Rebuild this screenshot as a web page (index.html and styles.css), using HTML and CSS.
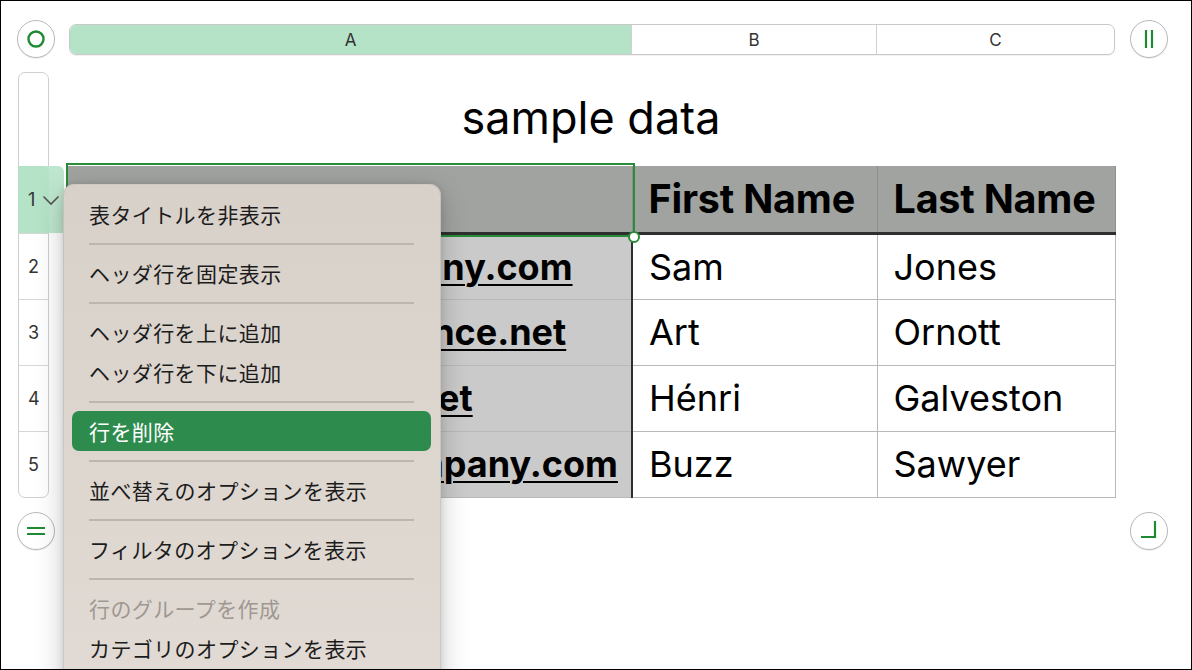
FILE: index.html
```html
<!DOCTYPE html>
<html lang="ja">
<head>
<meta charset="utf-8">
<title>sample data</title>
<link rel="stylesheet" href="styles.css">
</head>
<body>
<div class="page">
  <div class="sheet">
    <div class="corner corner-tl">
      <div class="knob">
        <svg width="22" height="22" viewBox="0 0 22 22"><circle cx="11" cy="11" r="7.5" fill="none" stroke="#1f8a33" stroke-width="2.4"/></svg>
      </div>
    </div>
    <div class="colbar">
      <div class="colhead col-a sel">A</div>
      <div class="colhead col-b">B</div>
      <div class="colhead col-c">C</div>
    </div>
    <div class="corner corner-tr">
      <div class="knob">
        <svg width="22" height="22" viewBox="0 0 22 22"><path d="M8 2v18M14 2v18" stroke="#1f8a33" stroke-width="2.2" fill="none"/></svg>
      </div>
    </div>

    <div class="rail">
      <div class="rail-top"></div>
      <div class="rowhead r1 sel"><span>1</span>
        <svg class="chev" width="18" height="11" viewBox="0 0 18 11"><path d="M1.5 1.5l7.5 7.5 7.5-7.5" fill="none" stroke="#555" stroke-width="1.6"/></svg>
      </div>
      <div class="rowhead r2"><span>2</span></div>
      <div class="rowhead r3"><span>3</span></div>
      <div class="rowhead r4"><span>4</span></div>
      <div class="rowhead r5"><span>5</span></div>
    </div>

    <div class="title">sample data</div>

    <div class="tablewrap">
      <table class="grid">
        <colgroup><col class="w-a"><col class="w-b"><col class="w-c"></colgroup>
        <tr class="hdr"><th class="ca"></th><th>First Name</th><th>Last Name</th></tr>
        <tr><td class="ca"><u>sam.jones@acompany.com</u></td><td>Sam</td><td>Jones</td></tr>
        <tr><td class="ca"><u>art.ornott@abc.finance.net</u></td><td>Art</td><td>Ornott</td></tr>
        <tr><td class="ca"><u>henri.galves@abc.net</u></td><td>Hénri</td><td>Galveston</td></tr>
        <tr><td class="ca"><u>buzz.sawyer@acompany.com</u></td><td>Buzz</td><td>Sawyer</td></tr>
      </table>
      <div class="selection"></div>
      <div class="handle"></div>
    </div>

    <div class="corner corner-bl">
      <div class="knob">
        <svg width="22" height="22" viewBox="0 0 22 22"><path d="M2 8h18M2 14h18" stroke="#1f8a33" stroke-width="2.2" fill="none"/></svg>
      </div>
    </div>
    <div class="corner corner-br">
      <div class="knob">
        <svg width="22" height="22" viewBox="0 0 22 22"><path d="M17 1v16H3" stroke="#1f8a33" stroke-width="2.2" fill="none"/></svg>
      </div>
    </div>
  </div>

  <div class="menu">
    <div class="item">表タイトルを非表示</div>
    <div class="sep"></div>
    <div class="item">ヘッダ行を固定表示</div>
    <div class="sep"></div>
    <div class="item">ヘッダ行を上に追加</div>
    <div class="item">ヘッダ行を下に追加</div>
    <div class="sep"></div>
    <div class="item active">行を削除</div>
    <div class="sep"></div>
    <div class="item">並べ替えのオプションを表示</div>
    <div class="sep"></div>
    <div class="item">フィルタのオプションを表示</div>
    <div class="sep"></div>
    <div class="item disabled">行のグループを作成</div>
    <div class="item">カテゴリのオプションを表示</div>
  </div>
</div>
</body>
</html>
```
FILE: styles.css
```css
* { box-sizing: border-box; }
html, body { margin: 0; padding: 0; background: #fff; }
body { font-family: Inter, "Liberation Sans", "Noto Sans CJK JP", sans-serif; color: #000; }

.page {
  width: 1192px;
  height: 670px;
  border: 1px solid #000;
  position: relative;
  overflow: hidden;
  background: #fff;
}

.sheet {
  display: grid;
  grid-template-columns: 66px 1048px 1fr;
  grid-template-rows: 71px 94px 332px 1fr;
}

.corner { display: flex; }
.corner-tl { grid-column: 1; grid-row: 1; padding: 19px 0 0 16px; }
.corner-tr { grid-column: 3; grid-row: 1; padding: 19px 0 0 15px; }
.corner-bl { grid-column: 1; grid-row: 4; padding: 14px 0 0 16px; }
.corner-br { grid-column: 3; grid-row: 4; padding: 14px 0 0 15px; }

.knob {
  width: 38px;
  height: 38px;
  border-radius: 50%;
  border: 1px solid #b9b9b9;
  background: #fff;
  display: flex;
  align-items: center;
  justify-content: center;
  box-shadow: 0 1px 1px rgba(0,0,0,0.08);
}

.colbar {
  grid-column: 2; grid-row: 1;
  margin: 23px 0 0 2px;
  height: 31px;
  display: flex;
  border: 1px solid #c9c9c9;
  border-radius: 7px;
  overflow: hidden;
  background: #fff;
  box-shadow: 0 1px 1px rgba(0,0,0,0.06);
}
.colhead {
  display: flex;
  align-items: center;
  justify-content: center;
  font-size: 17px;
  color: #333;
}
.col-a { width: 562px; border-right: 1px solid #d0d0d0; }
.col-b { width: 245px; border-right: 1px solid #d0d0d0; }
.col-c { flex: 1; }
.colhead.sel { background: #b5e3c8; }

.rail {
  grid-column: 1; grid-row: 2 / 4;
  margin-left: 17px;
  width: 31px;
  border: 1px solid #cfcfcf;
  border-radius: 7px;
  display: flex;
  flex-direction: column;
  background: #fff;
}
.rail-top { height: 93px; }
.rowhead {
  height: 66px;
  border-top: 1px solid #d6d6d6;
  display: flex;
  align-items: center;
  padding-left: 9px;
  font-size: 18px;
  color: #333;
  position: relative;
}
.rowhead.r1 { height: 67px; }
.rowhead.sel {
  background: #b5e3c8;
  width: 46px;
  margin-left: -1px;
  padding-left: 10px;
  border-top: none;
  border-radius: 0 6px 0 0;
  box-shadow: inset -15px 0 0 rgba(255,255,255,0.12);
}
.chev { margin-left: 7px; margin-top: 2px; }

.title {
  grid-column: 2; grid-row: 2;
  text-align: center;
  font-size: 45px;
  padding-top: 18px;
}

.tablewrap {
  grid-column: 2; grid-row: 3;
  position: relative;
}
.grid {
  border-collapse: collapse;
  table-layout: fixed;
  width: 1048px;
}
.w-a { width: 565px; }
.w-b { width: 245px; }
.w-c { width: 238px; }
.grid th, .grid td {
  height: 66px;
  padding: 0 0 0 16px;
  text-align: left;
  font-size: 36px;
  white-space: nowrap;
  overflow: hidden;
  border: 1px solid #b9b9b9;
}
.grid tr.hdr th {
  height: 67px;
  background: #a1a3a1;
  font-weight: 700;
  font-size: 39.5px;
  letter-spacing: -0.2px;
  border-color: #8f918f;
  border-bottom: 3px solid #2f2f2f;
  border-top: none;
}
.grid td.ca {
  background: #cacaca;
  border-right: 2px solid #2f2f2f;
  font-weight: 700;
  padding-left: 16px;
}
.grid td.ca u { text-decoration-thickness: 2px; text-underline-offset: 4px; }
.grid tr td:first-child, .grid tr th:first-child { border-left: none; }

.selection {
  position: absolute;
  left: -1px;
  top: -3px;
  width: 569px;
  height: 74px;
  border: 2px solid #2a8c3a;
  pointer-events: none;
}
.handle {
  position: absolute;
  left: 561px;
  top: 65px;
  width: 12px;
  height: 12px;
  border-radius: 50%;
  border: 2px solid #2a8c3a;
  background: #fff;
}

.menu {
  position: absolute;
  left: 62px;
  top: 183px;
  width: 378px;
  height: 520px;
  border-radius: 11px;
  background: linear-gradient(180deg, #d8d1ca 0%, #ded7d0 60%, #e2dbd5 100%);
  border: 1px solid rgba(0,0,0,0.08);
  box-shadow: 0 8px 28px rgba(0,0,0,0.22), 0 0 6px rgba(0,0,0,0.1);
  padding: 9px 9px 0 8px;
  font-family: "Noto Sans CJK JP", sans-serif;
}
.item {
  height: 40px;
  display: flex;
  align-items: center;
  padding-left: 17px;
  font-size: 21px;
  color: #1c1c1c;
  border-radius: 7px;
  letter-spacing: 0.4px;
}
.item.active { background: #2e8b4e; color: #fff; }
.item.disabled { color: #9e9892; }
.sep {
  height: 2px;
  margin: 9px 17px 8px 17px;
  background: #bdb6ae;
}
```
